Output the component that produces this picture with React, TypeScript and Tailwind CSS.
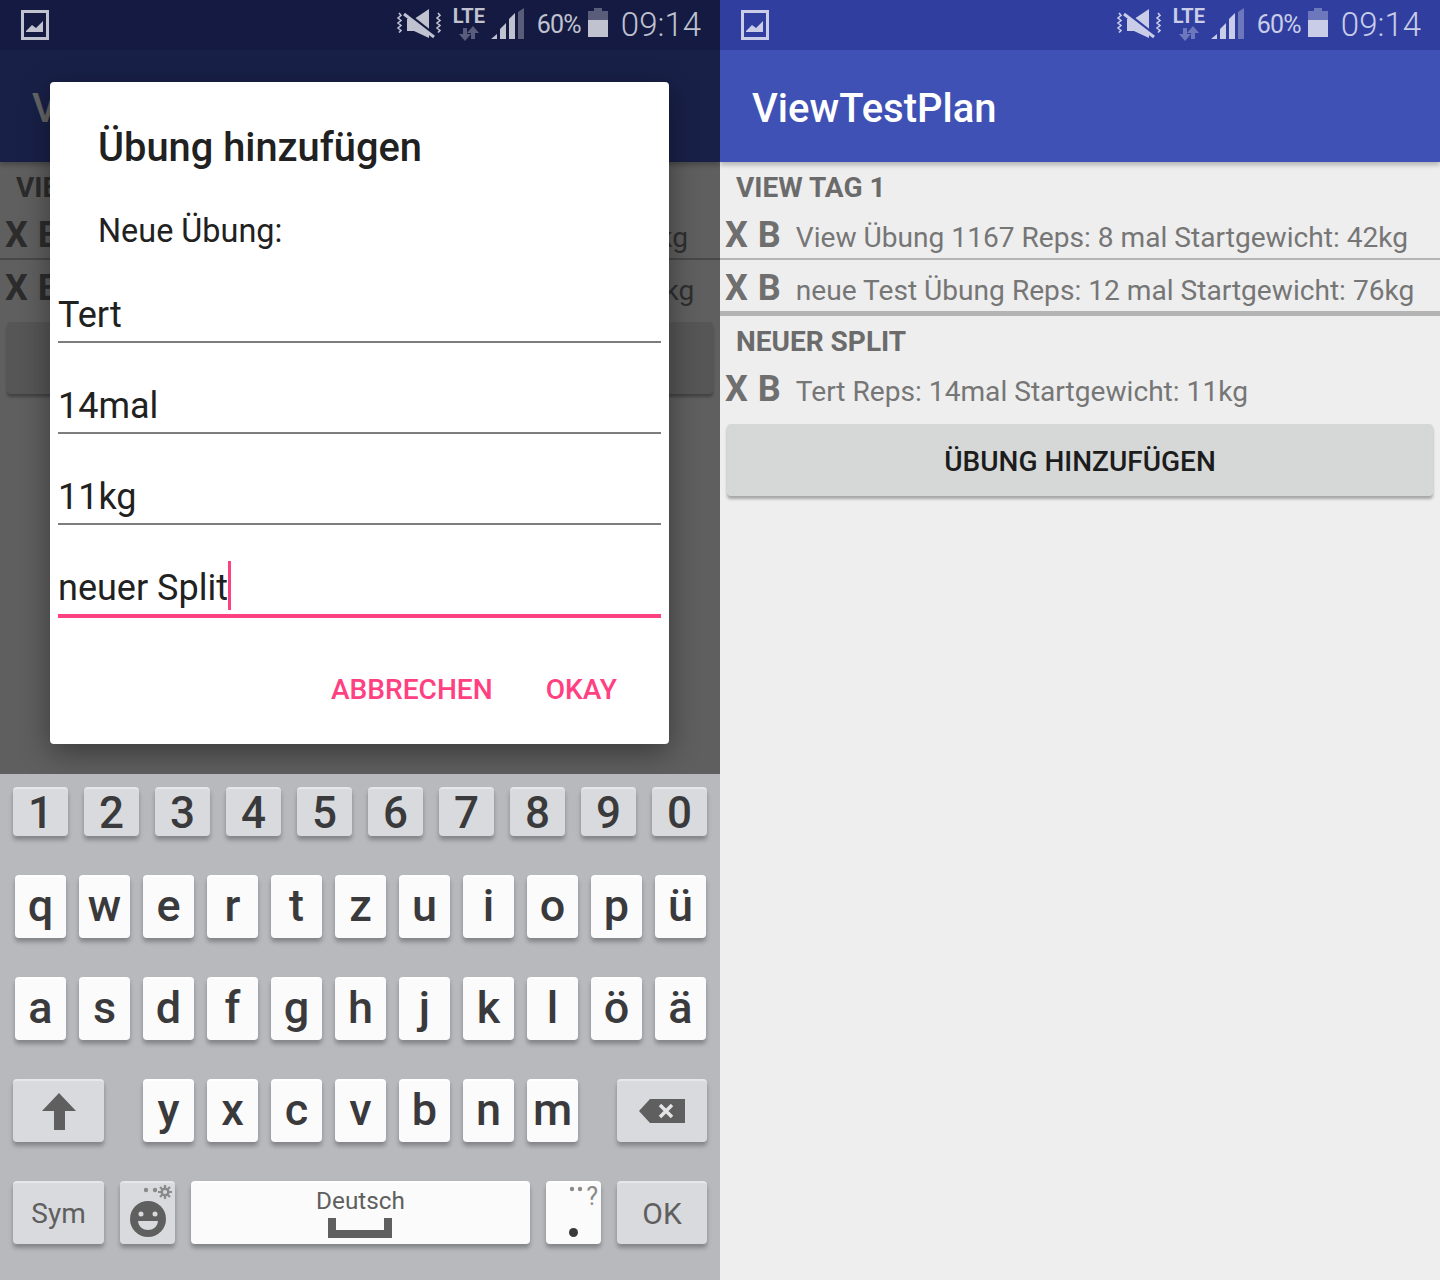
import React from "react";

type Row = string;
type Group = { title: string; rows: Row[] };

function MuteIcon() {
  return (
    <svg width="47" height="30" viewBox="0 0 47 30" className="block">
      <path d="M11 10 H18 L33 0 V29 L18 22 H11 Z" fill="currentColor" />
      <path d="M3 4 l2 2.500 -3 2.500 3 2.500 -3 2.500 3 2.500 -3 2.500 3 2.500 -2 2 M42 4 l2 2.500 -3 2.500 3 2.500 -3 2.500 3 2.500 -3 2.500 3 2.500 -2 2" fill="none" stroke="currentColor" strokeWidth="1.6" />
      <path d="M8 2 L36 24" stroke="var(--sb)" strokeWidth="3" />
      <path d="M8 5 L38 28" stroke="currentColor" strokeWidth="3" />
    </svg>
  );
}

function StatusBar({ bg, fg }: { bg: string; fg: string }) {
  return (
    <div className={`flex h-[50px] items-start ${bg} ${fg}`}>
      <svg width="28" height="30" viewBox="0 0 28 30" className="ml-[21px] mt-[10px] block">
        <path d="M1.500 1.500 H26.500 V28.500 H1.500 Z" fill="none" stroke="currentColor" strokeWidth="3" />
        <path d="M5 21 L11 15 L15 18 L22 11 V22 H5 Z" fill="currentColor" />
      </svg>
      <div className="ml-auto mt-[9px]"><MuteIcon /></div>
      <div className="ml-[8px] mt-[8px] flex w-[36px] flex-col items-center">
        <span className="text-[20px] leading-[16px] font-bold">LTE</span>
        <svg width="24" height="15" viewBox="0 0 24 15" className="mt-[2px] block opacity-40">
          <path d="M8 15 L2 8 H6 V2 H10 V8 H14 Z M16 0 L22 7 H18 V13 H14 V7 H10 Z" fill="currentColor" />
        </svg>
      </div>
      <svg width="33" height="32" viewBox="0 0 33 32" className="ml-[4px] mt-[8px] block">
        <path d="M0 31 L6 26 V31 Z M9 31 V21 L15 15 V31 Z" fill="currentColor" />
        <path d="M18 31 V11 L24 5 V31 Z" fill="currentColor" />
        <path d="M27 31 V4 L33 0 V31 Z" fill="currentColor" opacity="0.4" />
      </svg>
      <span className="ml-[13px] mt-[9px] text-[25px] leading-[32px] font-normal tracking-[-0.8px]">60%</span>
      <div className="ml-[7px] mt-[8px] flex w-[20px] flex-col items-center">
        <div className="h-[3px] w-[8px] bg-current opacity-40" />
        <div className="h-[9px] w-[20px] bg-current opacity-40" />
        <div className="h-[17px] w-[20px] bg-current" />
      </div>
      <span className="ml-[13px] mr-[19px] mt-[5px] text-[33px] leading-[40px] font-light">09:14</span>
    </div>
  );
}

function Body({ groups, buttonGap }: { groups: Group[]; buttonGap: string }) {
  return (
    <div className="h-full bg-[#eeeeee]">
      <div className="flex h-[112px] items-center bg-[#3f51b5] pt-[6px] pl-[32px] text-[40px] font-medium text-white shadow-[0_3px_5px_rgba(0,0,0,0.25)]">
        ViewTestPlan
      </div>
      {groups.map((g, gi) => (
        <div key={g.title}>
          <div className="h-[45px] pl-[16px] text-[28px] leading-[52px] font-bold text-[#6b6b6b] uppercase">{g.title}</div>
          {g.rows.map((r, i) => (
            <div key={r}>
              <div className="flex h-[51px] items-baseline pl-[5px] leading-[56px] text-[#6f6f6f]">
                <span className="text-[36px] font-bold">X</span>
                <span className="ml-[10px] text-[36px] font-bold">B</span>
                <span className="ml-[15px] text-[28.12px] font-normal text-[#767676]">{r}</span>
              </div>
              {i < g.rows.length - 1 && <div className="h-[2px] bg-[#b4b4b4]" />}
            </div>
          ))}
          {gi < groups.length - 1 && <div className="h-[5px] bg-[#b4b4b4]" />}
        </div>
      ))}
      <div className={`mx-[7px] flex h-[72px] items-center justify-center rounded-[4px] bg-[#d6d7d7] pt-[4px] text-[28px] font-medium text-[#1c1c1c] shadow-[0_3px_3px_rgba(0,0,0,0.3)] ${buttonGap}`}>
        ÜBUNG HINZUFÜGEN
      </div>
    </div>
  );
}

function Field({ value, focused, h }: { value: string; focused?: boolean; h: string }) {
  return (
    <div className={`flex items-end ${h} ${focused ? "border-b-4 border-[#ff4081]" : "border-b-2 border-[#7d7d7d]"}`}>
      <span className="mb-[1px] text-[36px] leading-[50px] text-[#212121]">{value}</span>
      {focused && <span className="mb-[4px] h-[49px] w-[3px] bg-[#ff4081]" />}
    </div>
  );
}

function Dialog() {
  return (
    <div className="absolute top-[32px] left-[50px] h-[662px] w-[619px] rounded-[4px] bg-white shadow-[0_8px_30px_rgba(0,0,0,0.4)]">
      <div className="pt-[41px] pl-[48px] text-[39.8px] leading-[50px] font-medium text-[#212121]">Übung hinzufügen</div>
      <div className="mt-[38px] pl-[48px] text-[32.4px] leading-[40px] text-[#212121]">Neue Übung:</div>
      <div className="mt-[36px] px-[8px]">
        <Field value="Tert" h="h-[56px]" />
        <Field value="14mal" h="h-[91px]" />
        <Field value="11kg" h="h-[91px]" />
        <Field value="neuer Split" focused h="h-[93px]" />
      </div>
      <div className="mt-[50px] flex justify-end gap-[53px] pr-[52px] text-[28.1px] leading-[44px] font-medium text-[#ff4081]">
        <span>ABBRECHEN</span>
        <span>OKAY</span>
      </div>
    </div>
  );
}

const keyBase = "flex items-center justify-center rounded-[4px] border-t-2 shadow-[0_4px_4px_rgba(0,0,0,0.28)]";
const light = "border-[#ffffff] bg-[#fbfbfb]";
const gray = "border-[#e6e7e9] bg-[#d9dadd]";

function Key({ label, cls }: { label: string; cls: string }) {
  return <div className={`${keyBase} ${cls} font-medium text-[#3a3a3c]`}>{label}</div>;
}

const letterCls = `h-[63px] w-[51px] pb-[4px] text-[45px] ${light}`;

function Keyboard() {
  return (
    <div className="flex h-[506px] flex-col bg-[#b8b9bd] pt-[13px]">
      <div className="flex gap-[16px] pl-[13px]">
        {"1234567890".split("").map((c) => (
          <Key key={c} label={c} cls={`h-[49px] w-[55px] text-[44px] ${gray}`} />
        ))}
      </div>
      <div className="mt-[39px] flex gap-[13px] pl-[15px]">
        {"qwertzuiopü".split("").map((c) => (
          <Key key={c} label={c} cls={letterCls} />
        ))}
      </div>
      <div className="mt-[39px] flex gap-[13px] pl-[15px]">
        {"asdfghjklöä".split("").map((c) => (
          <Key key={c} label={c} cls={letterCls} />
        ))}
      </div>
      <div className="mt-[39px] flex pl-[13px]">
        <div className={`${keyBase} ${gray} h-[63px] w-[91px]`}>
          <svg width="34" height="37" viewBox="0 0 34 37" className="block">
            <path d="M17 0 L34 18 H23 V37 H12 V18 H0 Z" fill="#5f5f5f" />
          </svg>
        </div>
        <div className="ml-[39px] flex gap-[13px]">
          {"yxcvbnm".split("").map((c) => (
            <Key key={c} label={c} cls={letterCls} />
          ))}
        </div>
        <div className={`${keyBase} ${gray} ml-[39px] h-[63px] w-[90px]`}>
          <svg width="46" height="24" viewBox="0 0 46 24" className="mb-[2px] block">
            <path d="M11 0 H46 V24 H11 L0 12 Z" fill="#5f5f5f" />
            <path d="M21 6 L33 18 M33 6 L21 18" stroke="#e4e4e6" strokeWidth="3.5" />
          </svg>
        </div>
      </div>
      <div className="mt-[39px] flex gap-[16px] pl-[13px]">
        <div className={`${keyBase} ${gray} h-[63px] w-[91px] text-[28px] text-[#5f5f5f]`}>Sym</div>
        <div className={`${keyBase} ${gray} relative h-[63px] w-[55px]`}>
          <svg width="55" height="63" viewBox="0 0 55 63" className="absolute -top-[2px] left-0 block">
            <circle cx="26" cy="9" r="2.2" fill="#8a8a8a" />
            <circle cx="35" cy="9" r="2.2" fill="#8a8a8a" />
            <path d="M45 4 V18 M38 11 H52 M40 6 L50 16 M50 6 L40 16" stroke="#8a8a8a" strokeWidth="2.2" />
            <circle cx="45" cy="11" r="4.500" fill="#8a8a8a" />
            <circle cx="45" cy="11" r="2" fill="#d9dadd" />
            <circle cx="28" cy="38" r="18" fill="#5f5f5f" />
            <circle cx="21" cy="33" r="2.500" fill="#d9dadd" />
            <circle cx="35" cy="33" r="2.500" fill="#d9dadd" />
            <path d="M18 40 H38 C37 52 19 52 18 40 Z" fill="#d9dadd" />
          </svg>
        </div>
        <div className={`${keyBase} ${light} h-[63px] w-[339px] flex-col justify-start`}>
          <span className="mt-[2px] text-[24.3px] leading-[32px] text-[#5f5f5f]">Deutsch</span>
          <svg width="64" height="20" viewBox="0 0 64 20" className="mr-[2px] mt-[1px] block">
            <path d="M0 0 H8 V12 H56 V0 H64 V20 H0 Z" fill="#5f5f5f" />
          </svg>
        </div>
        <div className={`${keyBase} ${light} relative h-[63px] w-[55px]`}>
          <svg width="14" height="8" viewBox="0 0 14 8" className="absolute top-[2px] left-[23px] block">
            <circle cx="3" cy="4" r="2.2" fill="#8a8a8a" />
            <circle cx="11" cy="4" r="2.2" fill="#8a8a8a" />
          </svg>
          <span className="absolute top-[0px] right-[3px] text-[25px] leading-[28px] text-[#8a8a8a]">?</span>
          <span className="absolute bottom-[7px] left-[23px] h-[9px] w-[9px] rounded-full bg-[#3a3a3c]" />
        </div>
        <div className={`${keyBase} ${gray} h-[63px] w-[90px] text-[30px] text-[#5f5f5f]`}>OK</div>
      </div>
    </div>
  );
}

export default function App() {
  const leftGroups: Group[] = [
    { title: "View Tag 1", rows: ["View Übung 1167 Reps: 8 mal Startgewicht: 42kg", "neue Test Übung Reps: 12 mal Startgewicht: 76kg"] },
  ];
  const rightGroups: Group[] = [
    ...leftGroups,
    { title: "Neuer Split", rows: ["Tert Reps: 14mal Startgewicht: 11kg"] },
  ];
  return (
    <div className="flex h-[1280px] w-[1440px] overflow-hidden font-['Roboto',sans-serif]">
      <div className="flex w-[720px] flex-col">
        <StatusBar bg="bg-[#141a42] [--sb:#141a42]" fg="text-[#c0c2d0]" />
        <div className="relative h-[724px] overflow-hidden">
          <Body groups={leftGroups} buttonGap="mt-[11px]" />
          <div className="absolute inset-0 bg-black/60" />
          <Dialog />
        </div>
        <Keyboard />
      </div>
      <div className="flex w-[720px] flex-col">
        <StatusBar bg="bg-[#303f9f] [--sb:#303f9f]" fg="text-[#c9cde8]" />
        <div className="flex-1">
          <Body groups={rightGroups} buttonGap="mt-[12px]" />
        </div>
      </div>
    </div>
  );
}
